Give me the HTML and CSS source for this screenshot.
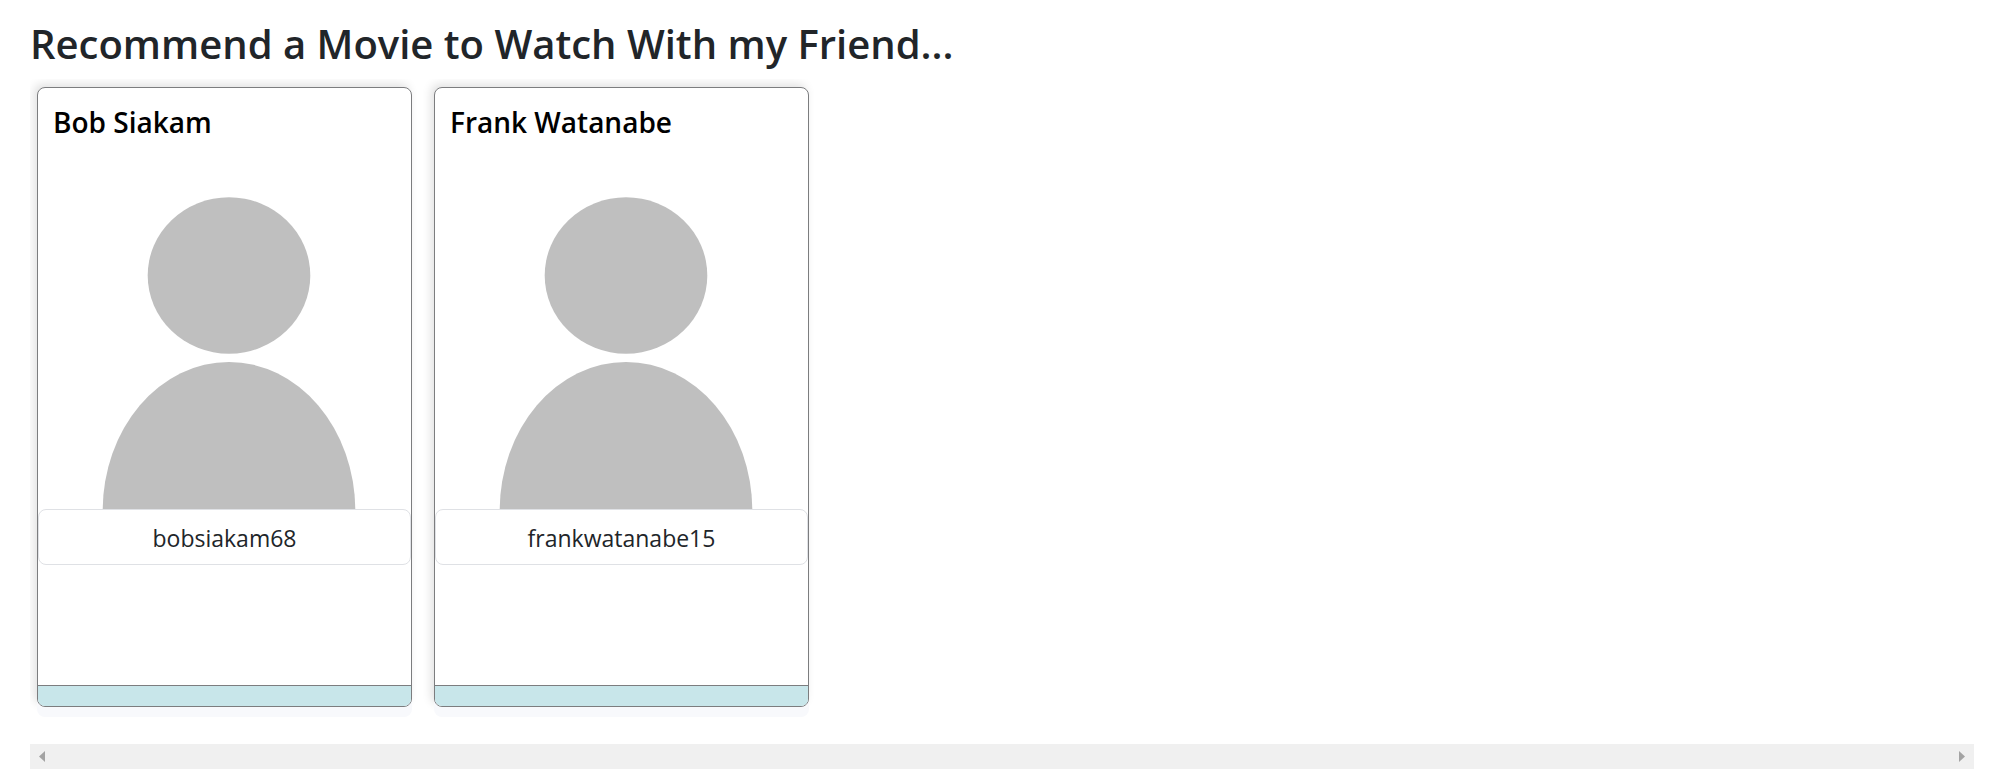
FILE: index.html
```html
<!DOCTYPE html>
<html lang="en">
<head>
<meta charset="utf-8">
<meta name="viewport" content="width=device-width, initial-scale=1">
<title>Recommend a Movie</title>
<link rel="stylesheet" href="styles.css">
</head>
<body>
<main class="page">
  <h1 class="page-title">Recommend a Movie to Watch With my Friend...</h1>
  <section class="friends" aria-label="Friends">
    <article class="card">
      <h2 class="card-title">Bob Siakam</h2>
      <svg class="avatar" viewBox="0 0 373 350" role="img" aria-label="Bob Siakam">
        <ellipse cx="191" cy="116.500" rx="81.3" ry="78.3"/>
        <ellipse cx="191" cy="351.500" rx="126.3" ry="148.5"/>
      </svg>
      <ul class="details"><li>bobsiakam68</li></ul>
      <footer class="card-footer"></footer>
    </article>
    <article class="card">
      <h2 class="card-title">Frank Watanabe</h2>
      <svg class="avatar" viewBox="0 0 373 350" role="img" aria-label="Frank Watanabe">
        <ellipse cx="191" cy="116.500" rx="81.3" ry="78.3"/>
        <ellipse cx="191" cy="351.500" rx="126.3" ry="148.5"/>
      </svg>
      <ul class="details"><li>frankwatanabe15</li></ul>
      <footer class="card-footer"></footer>
    </article>
  </section>
  <div class="scroll-track">
    <button class="scroll-button" type="button" aria-label="Scroll left"><svg width="6" height="11" viewBox="0 0 6 11"><path d="M6 0v11L0 5.5z"/></svg></button>
    <button class="scroll-button" type="button" aria-label="Scroll right"><svg width="6" height="11" viewBox="0 0 6 11"><path d="M0 0v11l6-5.500z"/></svg></button>
  </div>
</main>
</body>
</html>
```
FILE: styles.css
```css
* {
  box-sizing: border-box;
}

body {
  margin: 0;
  background: #fff;
  color: #212529;
  font-family: "Segoe UI", "Open Sans", "Noto Sans", sans-serif;
  font-size: 23px;
}

.page {
  padding: 19px 36px 14px 30px;
}

.page-title {
  margin: 0 0 10px;
  font-size: 40px;
  font-weight: 600;
  line-height: 50px;
}

.friends {
  display: flex;
  gap: 22px;
  padding: 8px 7px 37px;
  overflow: hidden;
}

.card {
  display: flex;
  flex: 0 0 375px;
  flex-direction: column;
  min-height: 620px;
  border: 1px solid #7c7d7f;
  border-radius: 8px;
  background: #fff;
  box-shadow: 0 10px 0 #f8f9fc, -3px -3px 10px rgba(0, 0, 0, 0.12);
}

.card-title {
  margin: 0;
  padding: 16px 15px 19px;
  color: #000;
  font-size: 28px;
  font-weight: 600;
  line-height: 36px;
}

.avatar {
  display: block;
  width: 100%;
  fill: #bfbfbf;
}

.details {
  margin: 0;
  padding: 0;
  border: 1px solid #dfe1e5;
  border-radius: 8px;
  background: #fff;
  list-style: none;
  text-align: center;
  line-height: 36px;
}

.details li {
  padding: 10px 20px 8px;
}

.card-footer {
  height: 21px;
  margin-top: auto;
  border-top: 1px solid #7c7d7f;
  border-radius: 0 0 7px 7px;
  background: #c8e6ea;
}

.scroll-track {
  display: flex;
  justify-content: space-between;
  height: 25px;
  background: #f0f0f0;
}

.scroll-button {
  display: flex;
  align-items: center;
  justify-content: center;
  width: 24px;
  padding: 0;
  border: 0;
  background: none;
}

.scroll-button path {
  fill: #a3a3a3;
}
```
